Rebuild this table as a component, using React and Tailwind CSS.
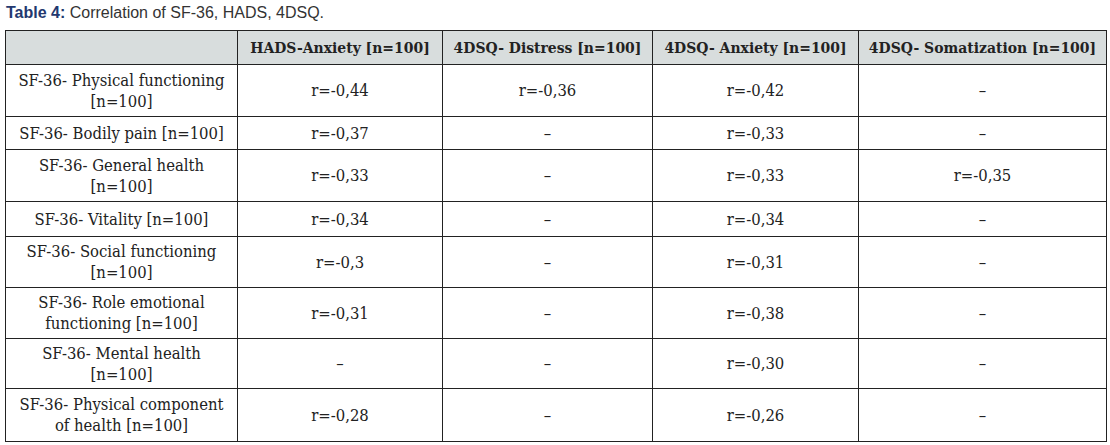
import React from "react";

const headers = [
  "HADS-Anxiety [n=100]",
  "4DSQ- Distress [n=100]",
  "4DSQ- Anxiety [n=100]",
  "4DSQ- Somatization [n=100]",
];

const rows = [
  { label: ["SF-36- Physical functioning", "[n=100]"], h: "h-[52px]", vals: ["r=-0,44", "r=-0,36", "r=-0,42", "–"] },
  { label: ["SF-36- Bodily pain [n=100]"], h: "h-[33px]", vals: ["r=-0,37", "–", "r=-0,33", "–"] },
  { label: ["SF-36- General health", "[n=100]"], h: "h-[52px]", vals: ["r=-0,33", "–", "r=-0,33", "r=-0,35"] },
  { label: ["SF-36- Vitality [n=100]"], h: "h-[35px]", vals: ["r=-0,34", "–", "r=-0,34", "–"] },
  { label: ["SF-36- Social functioning", "[n=100]"], h: "h-[51px]", vals: ["r=-0,3", "–", "r=-0,31", "–"] },
  { label: ["SF-36- Role emotional", "functioning [n=100]"], h: "h-[51px]", vals: ["r=-0,31", "–", "r=-0,38", "–"] },
  { label: ["SF-36- Mental health", "[n=100]"], h: "h-[50px]", vals: ["–", "–", "r=-0,30", "–"] },
  { label: ["SF-36- Physical component", "of health [n=100]"], h: "h-[53px]", vals: ["r=-0,28", "–", "r=-0,26", "–"] },
];

export default function App() {
  return (
    <div className="w-[1110px] h-[445px] bg-white pt-[3px] pl-[6px]">
      <p className="font-['Liberation_Sans',Arial,sans-serif] text-[16px] leading-[20px] text-[#333]">
        <span className="font-bold text-[#23386f]">Table 4:</span> Correlation of SF-36, HADS, 4DSQ.
      </p>
      <table className="mt-[7px] -ml-px border-collapse table-fixed w-[1101px] font-['DejaVu_Serif','Liberation_Serif',serif] font-stretch-condensed text-[16.5px] leading-[21px] text-[#222] text-center">
        <colgroup>
          <col className="w-[232px]" />
          <col className="w-[205px]" />
          <col className="w-[210px]" />
          <col className="w-[206px]" />
          <col className="w-[248px]" />
        </colgroup>
        <thead>
          <tr className="h-[34px] bg-[#d8dddd]">
            <th className="border border-[#222]" />
            {headers.map((t) => (
              <th key={t} className="border border-[#222] font-bold text-[15.5px]">
                {t}
              </th>
            ))}
          </tr>
        </thead>
        <tbody>
          {rows.map((r) => (
            <tr key={r.label.join(" ")} className={r.h}>
              <td className="border border-[#222] px-1">
                {r.label.map((l) => (
                  <div key={l}>{l}</div>
                ))}
              </td>
              {r.vals.map((v, i) => (
                <td key={i} className="border border-[#222]">
                  {v}
                </td>
              ))}
            </tr>
          ))}
        </tbody>
      </table>
    </div>
  );
}
